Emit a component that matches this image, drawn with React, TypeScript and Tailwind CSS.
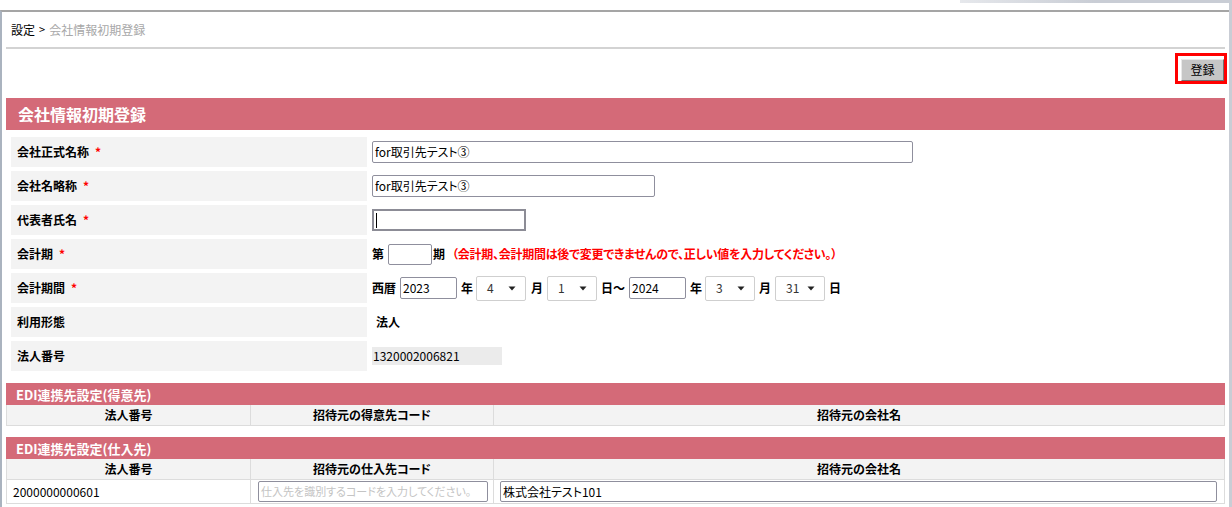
import React from "react";

const pink = "bg-[#d46a78]";

function Caret() {
    return (
        <svg width="8" height="5" viewBox="0 0 8 5" className="shrink-0">
            <path d="M0.5 0.5 L7.5 0.5 L4 4.5 Z" fill="#222" />
        </svg>
    );
}

function Select({ value }: { value: string }) {
    return (
        <div className="flex h-[25px] w-[50px] items-center justify-between rounded-[2px] border border-[#cfcfcf] bg-white pl-[10px] pr-[9px] font-normal text-[#333]">
            <span>{value}</span>
            <Caret />
        </div>
    );
}

function TextBox({ value, className }: { value?: string; className: string }) {
    return (
        <div className={`flex h-[22px] items-center rounded-[2px] border border-[#8f8f9d] bg-white px-[2px] font-normal text-black ${className}`}>
            {value}
        </div>
    );
}

function Row({ label, required, children }: { label: string; required?: boolean; children?: React.ReactNode }) {
    return (
        <div className="flex h-[30px]">
            <div className="flex w-[356px] shrink-0 items-center bg-[#f3f3f3] pl-[6px] font-bold">
                {label}
                {required && <span className="ml-[6px] text-[#ff0000]">*</span>}
            </div>
            <div className="flex flex-1 items-center pl-[5px] font-bold">{children}</div>
        </div>
    );
}

function EdiSection({ title, codeLabel, rows }: { title: string; codeLabel: string; rows?: boolean }) {
    return (
        <div>
            <div className={`${pink} flex h-[22px] items-center pl-[10px] text-[13px] font-bold text-white`}>{title}</div>
            <div className="grid grid-cols-[244px_243px_1fr] border-x border-b border-[#dcdcdc]">
                <div className="flex h-[20px] items-center justify-center border-r border-[#dcdcdc] bg-[#f3f3f3] font-bold">法人番号</div>
                <div className="flex h-[20px] items-center justify-center border-r border-[#dcdcdc] bg-[#f3f3f3] font-bold">{codeLabel}</div>
                <div className="flex h-[20px] items-center justify-center bg-[#f3f3f3] font-bold">招待元の会社名</div>
                {rows && (
                    <>
                        <div className="flex h-[24px] items-center border-r border-t border-[#dcdcdc] pl-[6px]">2000000000601</div>
                        <div className="flex h-[24px] items-center border-r border-t border-[#dcdcdc] pl-[7px]">
                            <div className="flex h-[21px] w-[230px] items-center rounded-[2px] border border-[#8f8f9d] px-[2px] text-[11px] text-[#c4c4c4]">
                                仕入先を識別するコードを入力してください。
                            </div>
                        </div>
                        <div className="flex h-[24px] items-center border-t border-[#dcdcdc] pl-[6px] pr-[7px]">
                            <div className="flex h-[21px] flex-1 items-center rounded-[2px] border border-[#8f8f9d] px-[2px]">株式会社テスト101</div>
                        </div>
                    </>
                )}
            </div>
        </div>
    );
}

export default function App() {
    return (
        <div className="flex h-[507px] w-[1232px] overflow-hidden bg-white font-['Noto_Sans_CJK_JP','Noto_Sans',sans-serif] text-[12px] leading-none text-black [font-feature-settings:'palt']">
            <div className="flex flex-1 flex-col">
                {/* top strip */}
                <div className="flex h-[10px] justify-end">
                    <div className="h-[3px] w-[269px] bg-gradient-to-r from-[#e6e8ec] via-[#c9cdd5] to-[#c9cdd5]" />
                </div>
                <div className="flex flex-1 flex-col border-l-2 border-t-2 border-l-[#aab3bf] border-t-[#a5a5a5] px-[4px]">
                    {/* breadcrumb */}
                    <div className="flex h-[37px] items-center border-b-2 border-[#d3d3d3] pl-[5px]">
                        <span>設定</span>
                        <span className="mx-[4px] text-[11px]">&gt;</span>
                        <span className="text-[#a8a8a8]">会社情報初期登録</span>
                    </div>

                    {/* action */}
                    <div className="flex h-[49px] items-start justify-end pt-[4px]">
                        <div className="-mr-[2px] border-[3px] border-[#ff0000] pl-[3px] pt-[3px]">
                            <button className="flex h-[22px] w-[43px] items-center justify-center border border-[#e8e8e8] border-b-[#707070] border-r-[#707070] bg-[#c6c6c6] text-[12px]">
                                登録
                            </button>
                        </div>
                    </div>

                    {/* main form */}
                    <div className={`${pink} flex h-[32px] items-center pl-[12px] text-[16px] font-bold text-white`}>会社情報初期登録</div>
                    <div className="flex flex-col gap-[4px] px-[5px] pt-[7px]">
                        <Row label="会社正式名称" required>
                            <TextBox value="for取引先テスト③" className="w-[541px]" />
                        </Row>
                        <Row label="会社名略称" required>
                            <TextBox value="for取引先テスト③" className="w-[283px]" />
                        </Row>
                        <Row label="代表者氏名" required>
                            <div className="flex h-[22px] w-[154px] items-center border-2 border-[#8c8c96] px-[2px]">
                                <span className="h-[15px] w-px bg-black" />
                            </div>
                        </Row>
                        <Row label="会計期" required>
                            <span>第</span>
                            <div className="ml-[4px] h-[21px] w-[44px] rounded-[2px] border border-[#8f8f9d]" />
                            <span className="ml-px">期</span>
                            <span className="ml-[7px] tracking-[-0.25px] text-[#ff0000]">（会計期、会計期間は後で変更できませんので、正しい値を入力してください。）</span>
                        </Row>
                        <Row label="会計期間" required>
                            <span>西暦</span>
                            <TextBox value="2023" className="ml-[4px] w-[57px]" />
                            <span className="ml-[4px] mr-[3px]">年</span>
                            <Select value="4" />
                            <span className="ml-[5px] mr-[4px]">月</span>
                            <Select value="1" />
                            <span className="ml-[4px] mr-[4px]">日～</span>
                            <TextBox value="2024" className="w-[57px]" />
                            <span className="ml-[4px] mr-[3px]">年</span>
                            <Select value="3" />
                            <span className="ml-[4px] mr-[4px]">月</span>
                            <Select value="31" />
                            <span className="ml-[4px]">日</span>
                        </Row>
                        <Row label="利用形態">
                            <span className="pl-[4px]">法人</span>
                        </Row>
                        <Row label="法人番号">
                            <div className="flex h-[18px] w-[130px] items-center bg-[#ebebeb] pl-[1px] font-normal">1320002006821</div>
                        </Row>
                    </div>

                    <div className="mt-[12px] flex flex-col gap-[11px]">
                        <EdiSection title="EDI連携先設定(得意先)" codeLabel="招待元の得意先コード" />
                        <EdiSection title="EDI連携先設定(仕入先)" codeLabel="招待元の仕入先コード" rows />
                    </div>
                </div>
            </div>
            <div className="w-[3px] shrink-0 bg-[#c9cdd5]" />
        </div>
    );
}
